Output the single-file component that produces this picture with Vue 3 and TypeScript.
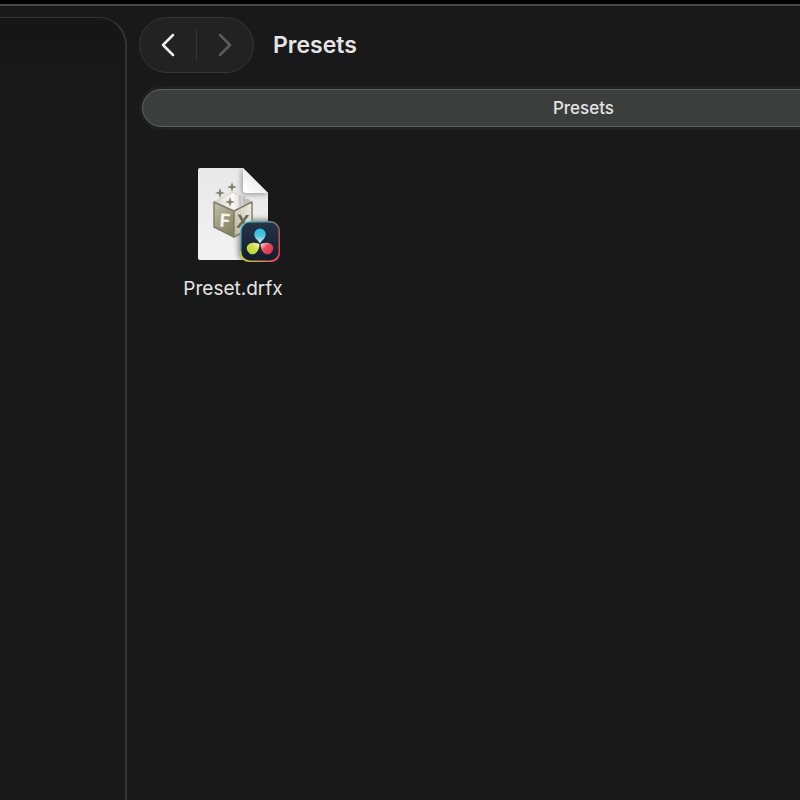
<script setup lang="ts">
import { ref } from 'vue'

interface FileItem {
  name: string
}

const folder = ref<string>('Presets')
const files = ref<FileItem[]>([{ name: 'Preset.drfx' }])
</script>

<template>
  <div class="window">
    <aside class="sidebar"></aside>
    <main class="content">
      <header class="toolbar">
        <nav class="history">
          <button type="button" class="step" aria-label="Back">
            <svg width="14" height="24" viewBox="0 0 14 24"><path d="M12 2 2 12l10 10" /></svg>
          </button>
          <span class="divider"></span>
          <button type="button" class="step forward" aria-label="Forward" disabled>
            <svg width="14" height="24" viewBox="0 0 14 24"><path d="M2 2l10 10L2 22" /></svg>
          </button>
        </nav>
        <h1 class="title">{{ folder }}</h1>
      </header>
      <button type="button" class="tab">{{ folder }}</button>
      <section class="files">
        <button v-for="file in files" :key="file.name" type="button" class="file">
          <svg class="icon" width="84" height="96" viewBox="0 0 84 96" aria-hidden="true">
            <defs>
              <linearGradient id="paper" x1="0" y1="0" x2="0" y2="1">
                <stop offset="0" stop-color="#e8e8e8" />
                <stop offset="1" stop-color="#f2f2f2" />
              </linearGradient>
              <linearGradient id="fold" x1="0.1" y1="0.9" x2="0.6" y2="0.4">
                <stop offset="0" stop-color="#ffffff" />
                <stop offset="1" stop-color="#e9e9e9" />
              </linearGradient>
              <linearGradient id="left" x1="0" y1="0" x2="0.6" y2="1">
                <stop offset="0" stop-color="#c3c1a8" />
                <stop offset="1" stop-color="#858264" />
              </linearGradient>
              <linearGradient id="right" x1="0" y1="1" x2="1" y2="0">
                <stop offset="0" stop-color="#b9b6a0" />
                <stop offset="1" stop-color="#f1f0ea" />
              </linearGradient>
              <linearGradient id="lid" x1="0" y1="0" x2="1" y2="0">
                <stop offset="0" stop-color="#d4d3cc" />
                <stop offset="0.5" stop-color="#fafafa" />
                <stop offset="1" stop-color="#aaa9a5" />
              </linearGradient>
              <linearGradient id="rim" x1="0" y1="0" x2="1" y2="1">
                <stop offset="0" stop-color="#64c5cd" />
                <stop offset="0.4" stop-color="#62939b" />
                <stop offset="0.65" stop-color="#b9534e" />
                <stop offset="1" stop-color="#ef3857" />
              </linearGradient>
              <linearGradient id="rimlow" x1="0" y1="0" x2="1" y2="0">
                <stop offset="0" stop-color="#b5cf45" />
                <stop offset="0.5" stop-color="#d59a48" />
                <stop offset="1" stop-color="#e4385a" />
              </linearGradient>
              <linearGradient id="face" x1="0" y1="0" x2="0" y2="1">
                <stop offset="0" stop-color="#233447" />
                <stop offset="1" stop-color="#151d2c" />
              </linearGradient>
              <linearGradient id="blue" x1="0" y1="0" x2="0" y2="1">
                <stop offset="0" stop-color="#2ab9df" />
                <stop offset="0.5" stop-color="#4fc9df" />
                <stop offset="1" stop-color="#e8f5ee" />
              </linearGradient>
              <linearGradient id="lime" x1="0" y1="1" x2="1" y2="0">
                <stop offset="0" stop-color="#b4d52d" />
                <stop offset="0.6" stop-color="#d5df48" />
                <stop offset="1" stop-color="#fffbe0" />
              </linearGradient>
              <linearGradient id="red" x1="1" y1="1" x2="0" y2="0">
                <stop offset="0" stop-color="#df2448" />
                <stop offset="0.6" stop-color="#e55162" />
                <stop offset="1" stop-color="#fff0e9" />
              </linearGradient>
              <filter id="soft" x="-30%" y="-30%" width="160%" height="160%">
                <feGaussianBlur stdDeviation="2.5" />
              </filter>
              <clipPath id="sheet">
                <path d="M2 0h43l25 25v65q0 2-2 2H2q-2 0-2-2V2q0-2 2-2z" />
              </clipPath>
            </defs>
            <g clip-path="url(#sheet)">
              <rect width="71" height="92" fill="url(#paper)" />
              <path d="M43 0v23q0 4 4 4h24z" fill="#777" opacity="0.6" filter="url(#soft)" />
              <rect x="40" y="51" width="44" height="44" rx="10" fill="#555" opacity="0.6" filter="url(#soft)" />
            </g>
            <path d="M45 0v22q0 3 3 3h22z" fill="url(#fold)" />
            <g stroke="#817f68" stroke-width="1.5" stroke-linejoin="round">
              <path d="M16 34 35 24l19 10-18 9z" fill="url(#lid)" stroke="#c8c7bf" stroke-width="0.8" />
              <path d="M16 34l20 9v26L16 59z" fill="url(#left)" />
              <path d="M36 43l18-9v25L36 69z" fill="url(#right)" />
            </g>
            <path d="M42 27v11M46 28v8M50 31v4" stroke="#bbbab6" stroke-width="1.5" />
            <g class="letters" text-anchor="middle">
              <text x="27" y="59" transform="rotate(4 27 53)" fill="#f6f6ee">F</text>
              <text x="45" y="60" transform="rotate(4 45 53)" fill="#686655">X</text>
            </g>
            <g fill="#85836b">
              <path d="M34 14l1.200 3.800L39 19l-3.800 1.200L34 24l-1.200-3.800L29 19l3.800-1.200z" />
              <path d="M22 20l1.200 3.800L27 25l-3.800 1.200L22 30l-1.200-3.800L17 25l3.800-1.200z" />
              <path d="M32 29l1.200 3.800L37 34l-3.800 1.200L32 39l-1.200-3.800L27 34l3.800-1.200z" />
            </g>
            <rect x="42" y="53" width="40" height="41" rx="10" fill="url(#rim)" />
            <path d="M42 83v1q0 10 10 10h20q10 0 10-10v-1z" fill="url(#rimlow)" />
            <rect x="43.500" y="54.500" width="37" height="38" rx="8.500" fill="url(#face)" />
            <path d="M62 75.500c-1-3-5.700-4.700-5.700-9.300a5.700 5.700 0 0 1 11.400 0c0 4.600-4.700 6.300-5.700 9.300z" fill="url(#blue)" />
            <path d="M61.300 76c.3 3-.9 7.700-4.500 9.700a5.700 5.700 0 0 1-5.500-9.900c3.700-2 7.400-.5 10 .2z" fill="url(#lime)" />
            <path d="M62.700 76c-.3 3 .9 7.700 4.500 9.700a5.700 5.700 0 0 0 5.500-9.900c-3.700-2-7.400-.5-10 .2z" fill="url(#red)" />
          </svg>
          <span class="name">{{ file.name }}</span>
        </button>
      </section>
    </main>
  </div>
</template>

<style>
body {
  background: #191919;
}
</style>

<style scoped>
.window {
  box-sizing: border-box;
  display: flex;
  min-height: 100vh;
  overflow: hidden;
  border-top: 4px solid #000;
  background: #191919;
  box-shadow: inset 0 2px #48494b;
  color: #e4e4e4;
  font-family: Inter, "Liberation Sans", sans-serif;
}
button {
  border: 0;
  padding: 0;
  background: none;
  color: inherit;
  font: inherit;
}
.sidebar {
  flex: 0 0 127px;
  box-sizing: border-box;
  margin-top: 13px;
  border: solid #333;
  border-width: 1px 2px 0 0;
  border-top-right-radius: 28px;
  background: linear-gradient(#161616, #191919 100px);
}
.content {
  flex: 1;
  min-width: 0;
  padding: 13px 0 0 12px;
}
.toolbar {
  display: flex;
  align-items: center;
  gap: 19px;
}
.history {
  display: flex;
  align-items: center;
  box-sizing: border-box;
  width: 115px;
  height: 56px;
  border: 1px solid #363636;
  border-radius: 28px;
  background: #222;
}
.step {
  display: flex;
  flex: 1;
  align-items: center;
  justify-content: center;
  height: 100%;
}
.step path {
  fill: none;
  stroke: #f0f0f0;
  stroke-width: 2.5;
  stroke-linecap: round;
  stroke-linejoin: round;
}
.forward path {
  stroke: #5c5c5c;
}
.divider {
  width: 1px;
  height: 32px;
  background: #363636;
}
.title {
  margin: 0;
  font-size: 23px;
  font-weight: 600;
  line-height: 32px;
}
.tab {
  display: block;
  box-sizing: border-box;
  width: calc(100% + 222px);
  height: 38px;
  margin: 16px 0 0 3px;
  border: 1px solid #606262;
  border-radius: 20px;
  background: #3c3d3d;
  box-shadow: 0 0 0 3px #202020;
  font-size: 17px;
  font-weight: 500;
}
.files {
  display: flex;
  flex-wrap: wrap;
  padding: 41px 33px;
}
.file {
  display: flex;
  flex-direction: column;
  align-items: center;
  gap: 12px;
  width: 122px;
}
.icon {
  margin-left: 14px;
}
.letters {
  font-size: 18px;
  font-weight: 700;
}
.name {
  font-size: 19px;
  line-height: 26px;
}
</style>
